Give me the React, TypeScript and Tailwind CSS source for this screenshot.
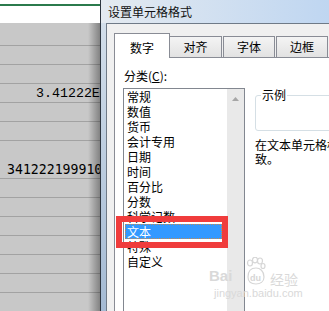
import React from 'react';

const cjk = "font-['Noto_Sans_CJK_SC','Liberation_Sans',sans-serif]";

const categories = ['常规', '数值', '货币', '会计专用', '日期', '时间', '百分比', '分数', '科学记数', '文本', '特殊', '自定义'];

// sheet rows: height incl. bottom grid line
const rows = [
  { h: 'h-[23px]' },
  { h: 'h-[19px]' },
  { h: 'h-[19px]' },
  { h: 'h-[19px]', text: '3.41222E+17', cls: "pl-[36px] font-['Liberation_Mono',monospace] text-[13.3px]" },
  { h: 'h-[19px]' },
  { h: 'h-[19px]' },
  { h: 'h-[38px]', text: '341222199910125847', cls: "pl-[7px] font-['DejaVu_Sans_Mono',monospace] text-[13.2px]" },
  { h: 'h-[19px]' },
  { h: 'h-[19px]' },
  { h: 'h-[19px]' },
  { h: 'h-[19px]' },
  { h: 'h-[19px]' },
  { h: 'h-[19px]' },
  { h: 'h-[19px]' },
];

const Sheet: React.FC = () => (
  <div className="w-[100px] shrink-0 relative flex flex-col overflow-hidden">
    <div className="h-[23px] shrink-0 bg-white pt-[4px]">
      <div className="h-[2px] bg-[#2b7a4c]" />
    </div>
    <div className="flex-1 bg-[#c8c8c8]">
      {rows.map((r, i) => (
        <div key={i} className={`${r.h} border-b border-[#a2a2a2] flex items-end`}>
          {r.text && (
            <span className={`${r.cls} whitespace-nowrap leading-[15px] pb-[1px] text-black`}>{r.text}</span>
          )}
        </div>
      ))}
    </div>
    {/* dialog drop shadow */}
    <div className="absolute top-[23px] right-0 bottom-0 w-[12px] bg-gradient-to-r from-transparent to-black/35" />
  </div>
);

const Tab: React.FC<{ label: string; className?: string }> = ({ label, className }) => (
  <div className={`h-[21px] w-[52px] border-t border-[#898c95] bg-gradient-to-b from-[#f4f4f4] to-[#e2e2e2] flex items-center justify-center text-[12px] leading-[14px] text-black ${className ?? ''}`}>
    {label}
  </div>
);

const Dialog: React.FC = () => (
  <div className={`flex-1 min-w-0 flex flex-col border-l border-[#2e3640] bg-gradient-to-b from-[#d6e1ec] to-[#a4bad3] ${cjk}`}>
    <div className="h-[23px] shrink-0 flex items-center pl-[7px] pt-[1px] bg-gradient-to-r from-[#e4eaf0] to-[#bfd6f1] text-[12px] text-[#111] whitespace-nowrap">
      设置单元格格式
    </div>
    <div className="flex-1 min-h-0 ml-[5px] border-l border-t border-[#6f7a87] bg-[#f0f0f0] pl-[7px] flex flex-col">
      <div className="h-[33px] shrink-0 flex items-end">
        <div className="relative z-10 -mb-px h-[25px] w-[56px] border-t border-l border-r border-[#898c95] bg-white flex items-center justify-center pt-[3px] text-[12px] leading-[14px] text-black">
          数字
        </div>
        <Tab label="对齐" className="border-r" />
        <Tab label="字体" className="ml-px border-l border-r" />
        <Tab label="边框" className="ml-px border-l border-r" />
      </div>
      <div className="flex-1 min-h-0 bg-white border-l border-t border-[#898c95] flex text-[12px] text-black">
        <div className="w-[130px] shrink-0 pl-[8px] flex flex-col">
          <div className="mt-[11px] pl-[1px] leading-[14px] whitespace-nowrap">
            分类(<span className="underline">C</span>):
          </div>
          <div className="mt-[5px] flex-1 flex border-l border-t border-r border-[#828790]">
            <div className="flex-1 flex flex-col">
              {categories.map((c) => {
                const sel = c === '文本';
                return (
                  <div
                    key={c}
                    className={`h-[15px] leading-[15px] ml-px mr-[5px] pl-[2px] whitespace-nowrap ${
                      sel ? 'bg-[#3399ff] text-white outline outline-1 outline-dotted outline-[#c98a4a] -outline-offset-1' : ''
                    }`}
                  >
                    {c}
                  </div>
                );
              })}
            </div>
            <div className="w-[17px] shrink-0 bg-[#e9e9e9] flex flex-col">
              <div className="h-[17px] flex items-center justify-center pt-[2px]">
                <svg width="7" height="4" viewBox="0 0 7 4">
                  <path d="M0 4 L3.5 0 L7 4 Z" fill="#a6a6a6" />
                </svg>
              </div>
            </div>
          </div>
        </div>
        <div className="ml-[10px] w-[220px] shrink-0">
          <div className="relative mt-[37px] h-[36px] border border-[#d5dfe5] rounded-[3px]">
            <span className="absolute left-[5px] -top-[8px] bg-white px-px leading-[14px]">示例</span>
          </div>
          <div className="mt-[7px] leading-[14px] whitespace-nowrap">
            <div>在文本单元格格式中，数字作为文本处理。单元格显示的内容与输入的内容完全一</div>
            <div>致。</div>
          </div>
        </div>
      </div>
    </div>
  </div>
);

const Watermark: React.FC = () => (
  <div className="absolute left-[208px] top-[256px] w-[100px] h-[44px] text-[#d9d9d9] pointer-events-none">
    <span className="absolute left-[1px] top-[12px] text-[15px] font-bold leading-[16px] font-['Liberation_Sans',sans-serif]">Bai</span>
    <svg className="absolute left-[38px] top-[1px]" width="20" height="28" viewBox="0 0 20 28">
      <g fill="none" stroke="#d6d6d6" strokeWidth="1.2">
        <ellipse cx="4" cy="6" rx="2.5" ry="3" />
        <ellipse cx="9" cy="3" rx="2.5" ry="2.8" />
        <ellipse cx="14" cy="4" rx="2.5" ry="3" />
        <ellipse cx="17" cy="9" rx="2" ry="2.5" />
        <path d="M2 20 C2 13 6 11 10 11 C14 11 18 14 18 20 C18 25 14 27 10 27 C5 27 2 25 2 20 Z" />
      </g>
      <text x="4" y="24" fontSize="9" fontWeight="bold" fill="#d6d6d6" fontFamily="Liberation Sans">du</text>
    </svg>
    <span className={`absolute left-[62px] top-[16px] text-[14px] leading-[15px] ${cjk}`}>经验</span>
    <span className="absolute left-[6px] top-[31px] text-[11px] leading-[12px] font-['Liberation_Sans',sans-serif]">jingyan.baidu.com</span>
  </div>
);

export default function App() {
  return (
    <div className="w-[329px] h-[311px] relative overflow-hidden flex bg-white">
      <Sheet />
      <Dialog />
      {/* red highlight drawn over the list */}
      <div className="absolute left-[116px] top-[216px] w-[112px] h-[32px] border-[6px] border-[#f03c3c]" />
      <Watermark />
    </div>
  );
}
